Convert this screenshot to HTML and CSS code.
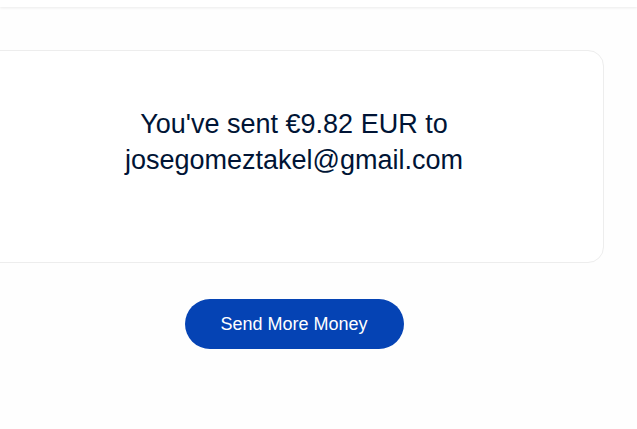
FILE: index.html
```html
<!DOCTYPE html>
<html>
<head>
<meta charset="utf-8">
<link rel="stylesheet" href="styles.css">
</head>
<body>
<div class="topbar"></div>
<main class="main">
  <section class="card">
    <p class="message">You've sent €9.82 EUR to<br>josegomeztakel@gmail.com</p>
  </section>
  <div class="actions">
    <button class="btn">Send More Money</button>
  </div>
</main>
</body>
</html>
```
FILE: styles.css
```css
html, body {
  margin: 0;
  padding: 0;
}
body {
  background: #fefefe;
  font-family: "Liberation Sans", Arial, sans-serif;
  width: 637px;
  height: 429px;
  overflow: hidden;
}
.topbar {
  height: 7px;
  background: #ffffff;
  box-shadow: 0 1px 3px rgba(0, 0, 0, 0.08);
}
.main {
  margin-left: -16px;
  width: 620px;
  padding-top: 43px;
}
.card {
  box-sizing: border-box;
  height: 213px;
  background: #ffffff;
  border: 1px solid #ededed;
  border-radius: 16px;
  display: flex;
  align-items: flex-start;
  justify-content: center;
  padding-top: 55px;
}
.message {
  margin: 0;
  text-align: center;
  font-size: 27px;
  line-height: 36px;
  color: #001435;
}
.actions {
  display: flex;
  justify-content: center;
  padding-top: 36px;
}
.btn {
  width: 219px;
  height: 50px;
  border: none;
  border-radius: 25px;
  background: #0543b4;
  color: #ffffff;
  font-family: "Liberation Sans", Arial, sans-serif;
  font-size: 18px;
  padding: 0;
}
```
